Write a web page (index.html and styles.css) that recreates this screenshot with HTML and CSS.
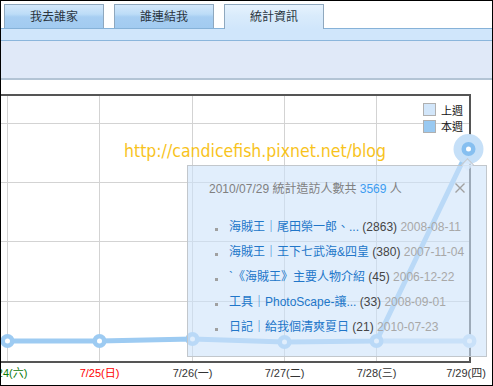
FILE: index.html
```html
<html>
	<head>
		<meta charset="utf-8">
		<title>統計資訊</title>
		<link rel="stylesheet" href="styles.css">
	</head>
	<body>
		<div class="frame">
			<div class="tabs">
				<div class="tab">我去誰家</div>
				<div class="tab">誰連結我</div>
				<div class="tab active">統計資訊</div>
			</div>
			<div class="bar"></div>
			<div class="subbar"></div>

			<div class="chart">
				<svg class="plot" width="491" height="291" viewBox="1 94 491 291">
					<!-- grid -->
					<g stroke="#d3d3d3" stroke-width="1">
						<line x1="7.5" y1="96" x2="7.5" y2="361"/>
						<line x1="99.5" y1="96" x2="99.5" y2="361"/>
						<line x1="192.5" y1="96" x2="192.5" y2="361"/>
						<line x1="284.5" y1="96" x2="284.5" y2="361"/>
						<line x1="376.5" y1="96" x2="376.5" y2="361"/>
						<line x1="1" y1="123.5" x2="469" y2="123.5"/>
						<line x1="1" y1="182.5" x2="469" y2="182.5"/>
						<line x1="1" y1="241.5" x2="469" y2="241.5"/>
						<line x1="1" y1="301.5" x2="469" y2="301.5"/>
					</g>
					<rect x="1" y="94" width="470" height="2" fill="#555"/>
					<rect x="469" y="94" width="2" height="269" fill="#555"/>
					<rect x="1" y="361" width="470" height="2" fill="#555"/>

					<!-- watermark -->
					<text x="124" y="157" font-size="17" textLength="262" lengthAdjust="spacingAndGlyphs" fill="#f8c31c" font-family="DejaVu Sans, sans-serif">http://candicefish.pixnet.net/blog</text>

					<!-- last week -->
					<polyline points="376.5,341 469.5,341" fill="none" stroke="#c4def7" stroke-width="5"/>
					<circle cx="469.5" cy="341" r="4.75" fill="#fff" stroke="#c4def7" stroke-width="4.5"/>

					<!-- this week -->
					<polyline points="7.5,341 99.5,341 192.5,339 284.5,342 376.5,341 468.5,149" fill="none" stroke="#9dcbf2" stroke-width="5" stroke-linejoin="round"/>
					<g fill="#fff" stroke="#9dcbf2" stroke-width="4.5">
						<circle cx="7.5" cy="341" r="4.75"/>
						<circle cx="99.5" cy="341" r="4.75"/>
						<circle cx="192.5" cy="339" r="4.75"/>
						<circle cx="284.5" cy="342" r="4.75"/>
						<circle cx="376.5" cy="341" r="4.75"/>
					</g>
					<circle cx="468.5" cy="149" r="15" fill="#c6e0f8"/>
					<circle cx="468.5" cy="149" r="4.75" fill="#fff" stroke="#86bff0" stroke-width="4.5"/>

					<!-- legend -->
					<rect x="423.5" y="103.5" width="12" height="12" fill="#d2e6fa" stroke="#b0b0b0"/>
					<rect x="423.5" y="120.5" width="12" height="12" fill="#99c9f1" stroke="#b0b0b0"/>
					<text class="legend" x="441" y="114.5">上週</text>
					<text class="legend" x="441" y="131">本週</text>

					<!-- x axis -->
					<g class="axis" text-anchor="middle">
						<text x="7.5" y="377" fill="#0a7a0a">7/24(六)</text>
						<text x="99.5" y="377" fill="#ff0000">7/25(日)</text>
						<text x="192.5" y="377">7/26(一)</text>
						<text x="284.5" y="377">7/27(二)</text>
						<text x="376.5" y="377">7/28(三)</text>
						<text x="466" y="377">7/29(四)</text>
					</g>
				</svg>

				<div class="tip">
					<div class="tip-title">2010/07/29 統計造訪人數共 <span class="tip-num">3569</span> 人</div>
					<svg class="tip-close" width="10" height="10" viewBox="0 0 10 10">
						<path d="M0.5 0.5 L9.5 9.5 M9.5 0.5 L0.5 9.5" stroke="#a0a0a0" stroke-width="1.4" fill="none"/>
					</svg>
					<ul class="tip-list">
						<li><a>海賊王｜尾田榮一郎、...</a> <span class="cnt">(2863)</span> <span class="date">2008-08-11</span></li>
						<li><a>海賊王｜王下七武海&amp;四皇</a> <span class="cnt">(380)</span> <span class="date">2007-11-04</span></li>
						<li><a>`《海賊王》主要人物介紹</a> <span class="cnt">(45)</span> <span class="date">2006-12-22</span></li>
						<li><a>工具｜PhotoScape-讓...</a> <span class="cnt">(33)</span> <span class="date">2008-09-01</span></li>
						<li><a>日記｜給我個清爽夏日</a> <span class="cnt">(21)</span> <span class="date">2010-07-23</span></li>
					</ul>
				</div>
			</div>
		</div>
	</body>
</html>
```

FILE: styles.css
```css
body
{
	margin: 0;
	background-color: #fff;
	font-family: "Liberation Sans", "Noto Sans CJK TC", sans-serif;
}

.frame
{
	width: 493px;
	height: 386px;
	box-sizing: border-box;
	border: 1px solid #000;
	overflow: hidden;
	background-color: #fff;
}

.tabs
{
	display: flex;
	gap: 10px;
	height: 24px;
	padding: 3px 0 0 3px;
}

.tab
{
	width: 100px;
	height: 24px;
	box-sizing: border-box;
	padding-top: 2px;
	border: 1px solid #8fa8be;
	border-bottom: none;
	text-align: center;
	font-size: 12px;
	line-height: 20px;
	color: #2a3440;
	background: linear-gradient(#d3e8fb, #bcdcf7 40%, #a7cef2 52%, #a2cbf0);
}

.tab.active
{
	height: 25px;
	position: relative;
	z-index: 1;
	background: linear-gradient(#e6f2fd, #d9ebfb 45%, #d0e6fb);
}

.bar
{
	height: 11px;
	background-color: #d0e6fb;
	border-top: 1px solid #86b2d8;
	border-bottom: 1px solid #8bb6dc;
}

.subbar
{
	height: 37px;
	background-color: #e0e9f8;
	border-bottom: 2px solid #b3c4d5;
}

.chart
{
	position: relative;
	margin-top: 14px;
	height: 291px;
}

.plot
{
	display: block;
}

.plot .legend
{
	font-size: 11px;
	fill: #111;
}

.plot .axis
{
	font-size: 11px;
	fill: #333;
}

.tip
{
	position: absolute;
	left: 186px;
	top: 71px;
	width: 300px;
	height: 192px;
	box-sizing: border-box;
	padding: 15px 20px 0 21px;
	border: 1px solid #c2c7cc;
	background-color: rgba(205, 227, 250, 0.6);
}

.tip::before
{
	content: "";
	position: absolute;
	left: 275px;
	top: -6px;
	width: 8px;
	height: 8px;
	border-top: 1px solid #c2c7cc;
	border-left: 1px solid #c2c7cc;
	background-color: rgba(215, 233, 251, 0.8);
	transform: rotate(45deg);
}

.tip-title
{
	font-size: 12px;
	line-height: 16px;
	color: #808080;
}

.tip-num
{
	color: #3d9cf0;
}

.tip-close
{
	position: absolute;
	left: 267px;
	top: 17px;
}

.tip-list
{
	list-style: none;
	margin: 18px 0 0 0;
	padding: 0 0 0 6px;
}

.tip-list li
{
	font-size: 12px;
	line-height: 25px;
	white-space: nowrap;
	color: #444;
}

.tip-list li::before
{
	content: "";
	display: inline-block;
	width: 3px;
	height: 3px;
	margin-right: 11px;
	background-color: #a0a0a0;
}

.tip-list a
{
	color: #2176c9;
}

.tip-list .date
{
	color: #a8a8a8;
}
```
